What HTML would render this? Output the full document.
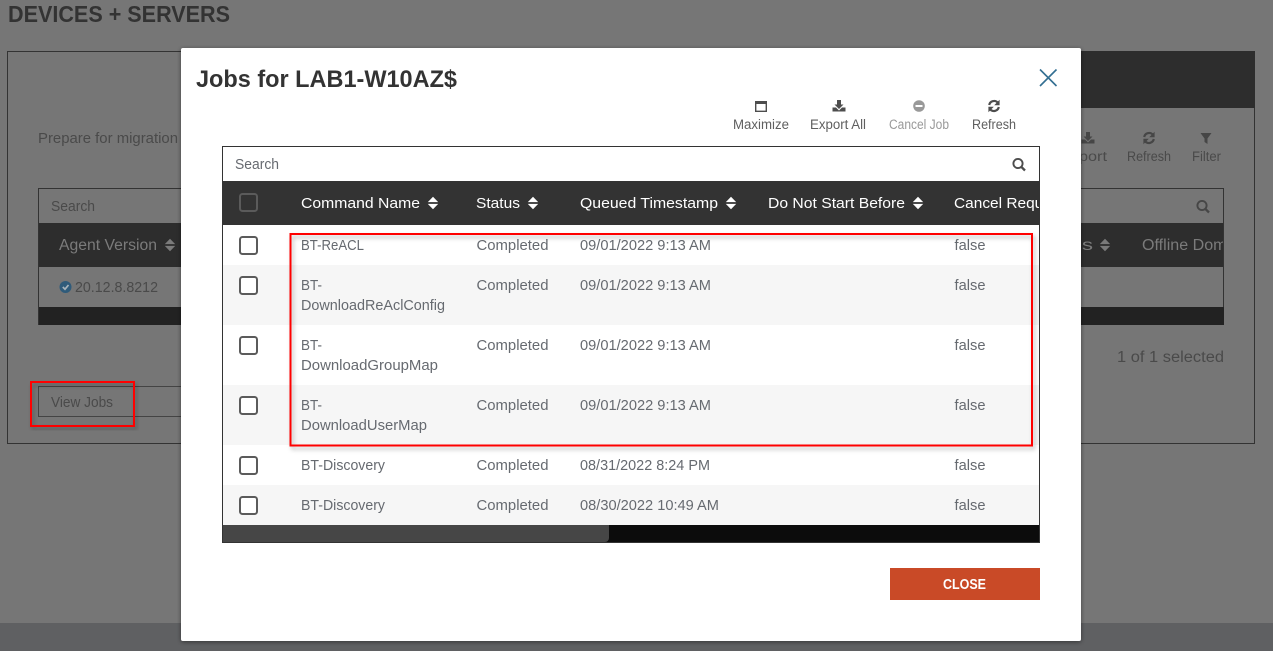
<!DOCTYPE html>
<html lang="en">
<head>
<meta charset="utf-8">
<title>Jobs for LAB1-W10AZ$</title>
<style>
html,body{margin:0;padding:0;width:1273px;height:651px;overflow:hidden;background:#767676}
svg{display:block}
text{font-family:"Liberation Sans",sans-serif;font-size:14.5px;white-space:pre}
.d{fill:#666a70}
.h{fill:#fff;font-size:15px}
.bg{fill:#4a4a4a}
.tb{fill:#5f5f5f;font-size:13.5px}
</style>
</head>
<body>
<svg width="1273" height="651" viewBox="0 0 1273 651" xmlns="http://www.w3.org/2000/svg">
<defs>
<filter id="ms" x="-5%" y="-5%" width="110%" height="110%"><feDropShadow dx="0" dy="1" stdDeviation="2.5" flood-color="#000" flood-opacity=".45"/></filter>
<filter id="rs" x="-5%" y="-10%" width="110%" height="120%"><feDropShadow dx="2" dy="3" stdDeviation="2" flood-color="#000" flood-opacity=".28"/></filter>
<clipPath id="c1"><rect x="223" y="181" width="816" height="44"/></clipPath>
<clipPath id="c2"><rect x="1081" y="223" width="142" height="44"/></clipPath>
<path id="sort" d="M-5.200-.9 0-6.300 5.200-.9ZM-5.200 .9 0 6.300 5.200 .9Z"/>
<g id="max"><path d="M-6-5.500H6V5.500H-6ZM-4.600-2.500V4.100H4.600V-2.500Z" fill-rule="evenodd"/></g>
<g id="exp"><path d="M-2-6H2V-1.500H4.500L0 3-4.500-1.500H-2ZM-6.500 1.500H-3L0 4.500 3 1.500H6.500V5.500H-6.500Z"/></g>
<g id="ref"><path d="M-4.800-1A5 5 0 0 1 3.700-3.500" fill="none" stroke-width="2.200" stroke="currentColor"/><path d="M5.600-6.300V-.8H.2Z"/><path d="M4.800 1A5 5 0 0 1-3.700 3.500" fill="none" stroke-width="2.200" stroke="currentColor"/><path d="M-5.600 6.300V.8H-.2Z"/></g>
<g id="srch"><circle cx="-1" cy="-1" r="4.600" fill="none" stroke="currentColor" stroke-width="1.900"/><path d="M2.400 2.400 6 6" stroke="currentColor" stroke-width="2.300" fill="none"/></g>
</defs>

<!-- page behind the modal -->
<rect width="1273" height="651" fill="#767676"/>
<rect y="623" width="1273" height="28" fill="#5f6062"/>
<text x="8" y="22" textLength="222" lengthAdjust="spacingAndGlyphs" style="font-size:23.500px;font-weight:bold;fill:#333">DEVICES + SERVERS</text>
<rect x="7.500" y="51.500" width="1247" height="392" fill="none" stroke="#333"/>
<rect x="1081" y="51" width="174" height="57" fill="#2d2d2d"/>
<text x="38" y="143" textLength="140" lengthAdjust="spacingAndGlyphs" class="bg">Prepare for migration</text>

<rect x="38.500" y="188.500" width="1185" height="136" fill="none" stroke="#333"/>
<text x="51" y="211" textLength="44" lengthAdjust="spacingAndGlyphs" class="bg">Search</text>
<rect x="39" y="223" width="1184" height="44" fill="#2d2d2d"/>
<rect x="39" y="307" width="1185" height="18" fill="#222"/>
<text x="59" y="250" textLength="98" lengthAdjust="spacingAndGlyphs" style="font-size:15.500px;fill:#7b7b7b">Agent Version</text>
<use href="#sort" transform="translate(170 245)" fill="#7b7b7b"/>
<circle cx="65.500" cy="287" r="6" fill="#2f5b7a"/>
<path d="M62.800 287 65 289.200 68.500 285" fill="none" stroke="#a9b4bb" stroke-width="1.700"/>
<text x="75" y="292" textLength="83" lengthAdjust="spacingAndGlyphs" class="bg" style="font-size:15px">20.12.8.8212</text>
<rect x="38.500" y="386.500" width="300" height="30" fill="none" stroke="#444"/>
<text x="51" y="407" textLength="62" lengthAdjust="spacingAndGlyphs" class="bg">View Jobs</text>
<rect x="31" y="382" width="103" height="44" fill="none" stroke="#f00" stroke-width="2" filter="url(#rs)"/>

<text x="1117" y="362" textLength="107" lengthAdjust="spacingAndGlyphs" class="bg" style="font-size:15.500px">1 of 1 selected</text>
<g fill="#464646" color="#464646">
<use href="#exp" transform="translate(1088 138)"/>
<use href="#ref" transform="translate(1149 138)"/>
<path d="M1200.500 133H1211.500L1207.500 138.500V144L1204.500 142V138.500Z"/>
<use href="#srch" transform="translate(1203 206.500)"/>
</g>
<text x="1060" y="161" textLength="47" lengthAdjust="spacingAndGlyphs" class="bg" style="font-size:13.500px">Export</text>
<text x="1127" y="161" textLength="44" lengthAdjust="spacingAndGlyphs" class="bg" style="font-size:13.500px">Refresh</text>
<text x="1192" y="161" textLength="29" lengthAdjust="spacingAndGlyphs" class="bg" style="font-size:13.500px">Filter</text>
<g clip-path="url(#c2)">
<text x="1030" y="250" textLength="63" lengthAdjust="spacingAndGlyphs" style="font-size:15.500px;fill:#7b7b7b">Status</text>
<text x="1142" y="250" textLength="106" lengthAdjust="spacingAndGlyphs" style="font-size:15.500px;fill:#7b7b7b">Offline Domain</text>
<use href="#sort" transform="translate(1105 245)" fill="#7b7b7b"/>
</g>

<!-- modal -->
<rect x="181" y="48" width="900" height="593" rx="2" fill="#fff" filter="url(#ms)"/>
<text x="196" y="87" textLength="261" lengthAdjust="spacingAndGlyphs" style="font-size:24px;font-weight:bold;fill:#333">Jobs for LAB1-W10AZ$</text>
<path d="M1040 69.500 1056.500 86M1056.500 69.500 1040 86" stroke="#336f92" stroke-width="1.600" fill="none"/>

<g fill="#4d4d4d" color="#4d4d4d">
<use href="#max" transform="translate(761 106.500)"/>
<use href="#exp" transform="translate(839 106)"/>
<use href="#ref" transform="translate(994 106)"/>
</g>
<circle cx="919" cy="106" r="5.800" fill="#999"/>
<rect x="915.500" y="105" width="7" height="2" fill="#fff"/>
<text x="733" y="129" textLength="56" lengthAdjust="spacingAndGlyphs" class="tb">Maximize</text>
<text x="810" y="129" textLength="56" lengthAdjust="spacingAndGlyphs" class="tb">Export All</text>
<text x="889" y="129" textLength="60" lengthAdjust="spacingAndGlyphs" class="tb" style="fill:#999">Cancel Job</text>
<text x="972" y="129" textLength="44" lengthAdjust="spacingAndGlyphs" class="tb">Refresh</text>

<!-- table -->
<rect x="223" y="225" width="816" height="300" fill="#fff"/>
<rect x="223" y="265" width="816" height="60" fill="#f6f6f6"/>
<rect x="223" y="385" width="816" height="60" fill="#f6f6f6"/>
<rect x="223" y="485" width="816" height="40" fill="#f6f6f6"/>
<rect x="223" y="181" width="816" height="44" fill="#333"/>
<rect x="223" y="525" width="816" height="17" fill="#0c0c0c"/>
<path d="M223 525H609V538a4 4 0 0 1-4 4H223Z" fill="#464646"/>
<rect x="222.500" y="146.500" width="817" height="396" fill="none" stroke="#333"/>

<text x="235" y="169" textLength="44" lengthAdjust="spacingAndGlyphs" class="d">Search</text>
<use href="#srch" transform="translate(1019 164.500)" color="#4d4d4d"/>

<rect x="240" y="194" width="17" height="17" rx="2.500" fill="#333" stroke="#5b5b5b" stroke-width="2"/>
<g clip-path="url(#c1)">
<text x="301" y="208" textLength="119" lengthAdjust="spacingAndGlyphs" class="h">Command Name</text>
<text x="476" y="208" textLength="44" lengthAdjust="spacingAndGlyphs" class="h">Status</text>
<text x="580" y="208" textLength="138" lengthAdjust="spacingAndGlyphs" class="h">Queued Timestamp</text>
<text x="768" y="208" textLength="137" lengthAdjust="spacingAndGlyphs" class="h">Do Not Start Before</text>
<text x="954" y="208" textLength="127" lengthAdjust="spacingAndGlyphs" class="h">Cancel Requested</text>
</g>
<g fill="#fff">
<use href="#sort" transform="translate(433 203)"/>
<use href="#sort" transform="translate(533 203)"/>
<use href="#sort" transform="translate(731 203)"/>
<use href="#sort" transform="translate(918 203)"/>
</g>

<g fill="#fff" stroke="#5b5b5b" stroke-width="2">
<rect x="240" y="237" width="17" height="17" rx="2.500"/>
<rect x="240" y="277" width="17" height="17" rx="2.500"/>
<rect x="240" y="337" width="17" height="17" rx="2.500"/>
<rect x="240" y="397" width="17" height="17" rx="2.500"/>
<rect x="240" y="457" width="17" height="17" rx="2.500"/>
<rect x="240" y="497" width="17" height="17" rx="2.500"/>
</g>

<g>
<text x="301" y="250" textLength="63" lengthAdjust="spacingAndGlyphs" class="d">BT-ReACL</text>
<text x="476.500" y="250" textLength="72" lengthAdjust="spacingAndGlyphs" class="d">Completed</text>
<text x="580" y="250" textLength="131" lengthAdjust="spacingAndGlyphs" class="d">09/01/2022 9:13 AM</text>
<text x="954.500" y="250" textLength="31" lengthAdjust="spacingAndGlyphs" class="d">false</text>

<text x="301" y="290" textLength="21" lengthAdjust="spacingAndGlyphs" class="d">BT-</text>
<text x="301" y="310" textLength="144" lengthAdjust="spacingAndGlyphs" class="d">DownloadReAclConfig</text>
<text x="476.500" y="290" textLength="72" lengthAdjust="spacingAndGlyphs" class="d">Completed</text>
<text x="580" y="290" textLength="131" lengthAdjust="spacingAndGlyphs" class="d">09/01/2022 9:13 AM</text>
<text x="954.500" y="290" textLength="31" lengthAdjust="spacingAndGlyphs" class="d">false</text>

<text x="301" y="350" textLength="21" lengthAdjust="spacingAndGlyphs" class="d">BT-</text>
<text x="301" y="370" textLength="137" lengthAdjust="spacingAndGlyphs" class="d">DownloadGroupMap</text>
<text x="476.500" y="350" textLength="72" lengthAdjust="spacingAndGlyphs" class="d">Completed</text>
<text x="580" y="350" textLength="131" lengthAdjust="spacingAndGlyphs" class="d">09/01/2022 9:13 AM</text>
<text x="954.500" y="350" textLength="31" lengthAdjust="spacingAndGlyphs" class="d">false</text>

<text x="301" y="410" textLength="21" lengthAdjust="spacingAndGlyphs" class="d">BT-</text>
<text x="301" y="430" textLength="126" lengthAdjust="spacingAndGlyphs" class="d">DownloadUserMap</text>
<text x="476.500" y="410" textLength="72" lengthAdjust="spacingAndGlyphs" class="d">Completed</text>
<text x="580" y="410" textLength="131" lengthAdjust="spacingAndGlyphs" class="d">09/01/2022 9:13 AM</text>
<text x="954.500" y="410" textLength="31" lengthAdjust="spacingAndGlyphs" class="d">false</text>

<text x="301" y="470" textLength="84" lengthAdjust="spacingAndGlyphs" class="d">BT-Discovery</text>
<text x="476.500" y="470" textLength="72" lengthAdjust="spacingAndGlyphs" class="d">Completed</text>
<text x="580" y="470" textLength="130" lengthAdjust="spacingAndGlyphs" class="d">08/31/2022 8:24 PM</text>
<text x="954.500" y="470" textLength="31" lengthAdjust="spacingAndGlyphs" class="d">false</text>

<text x="301" y="510" textLength="84" lengthAdjust="spacingAndGlyphs" class="d">BT-Discovery</text>
<text x="476.500" y="510" textLength="72" lengthAdjust="spacingAndGlyphs" class="d">Completed</text>
<text x="580" y="510" textLength="139" lengthAdjust="spacingAndGlyphs" class="d">08/30/2022 10:49 AM</text>
<text x="954.500" y="510" textLength="31" lengthAdjust="spacingAndGlyphs" class="d">false</text>
</g>

<rect x="290.500" y="234" width="741.500" height="211.500" fill="none" stroke="#f00" stroke-width="2" filter="url(#rs)"/>

<rect x="890" y="568" width="150" height="32" fill="#c94a27"/>
<text x="943" y="589" textLength="43" lengthAdjust="spacingAndGlyphs" style="font-size:14.500px;font-weight:bold;fill:#fff">CLOSE</text>
</svg>
</body>
</html>
